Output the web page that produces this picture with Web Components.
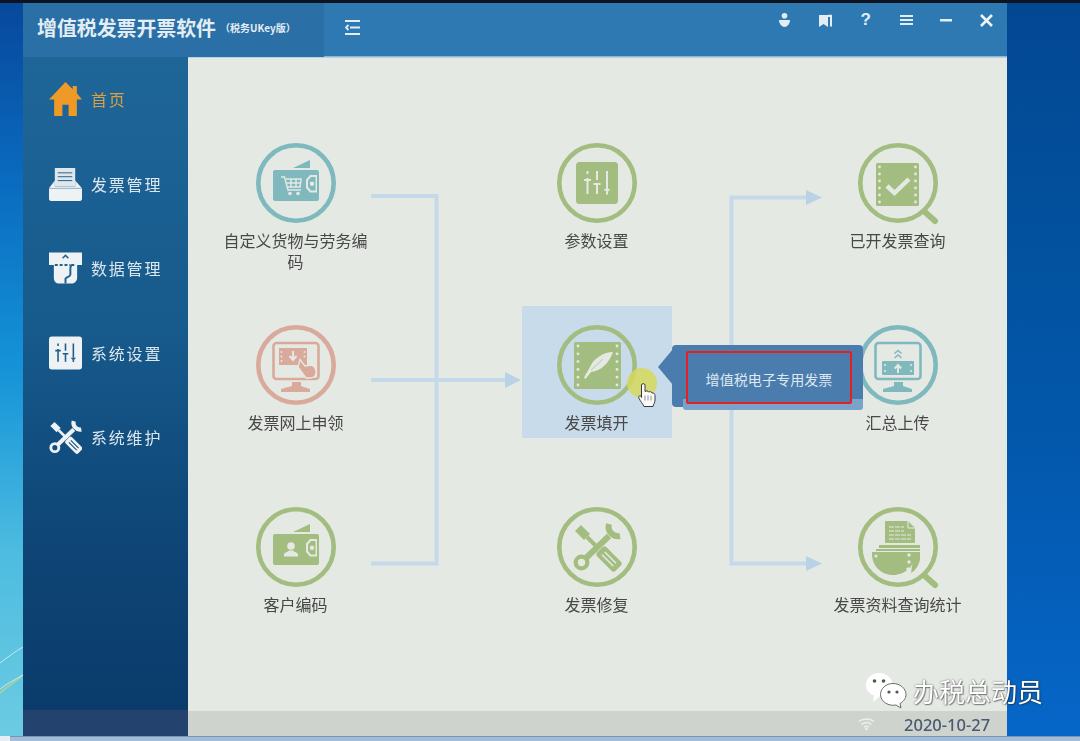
<!DOCTYPE html>
<html lang="zh-CN">
<head>
<meta charset="utf-8">
<title>增值税发票开票软件</title>
<style>
  html, body { margin: 0; padding: 0; background: #000; }
  body { width: 1080px; height: 741px; overflow: hidden; font-family: "Noto Sans CJK SC", "Noto Sans", sans-serif; }
</style>
</head>
<body>
<desk-shell>
  <app-window>
    <title-bar slot="title"></title-bar>
    <side-item slot="side" glyph="home" active>首页</side-item>
    <side-item slot="side" glyph="tray">发票管理</side-item>
    <side-item slot="side" glyph="data">数据管理</side-item>
    <side-item slot="side" glyph="sliders">系统设置</side-item>
    <side-item slot="side" glyph="tools">系统维护</side-item>
    <flow-board slot="main">
      <flow-node glyph="cart" tone="teal">自定义货物与劳务编码</flow-node>
      <flow-node glyph="sliders" tone="green">参数设置</flow-node>
      <flow-node glyph="check" tone="green" lens>已开发票查询</flow-node>
      <flow-node glyph="apply" tone="pink">发票网上申领</flow-node>
      <flow-node glyph="feather" tone="green" active>发票填开</flow-node>
      <flow-node glyph="upload" tone="teal">汇总上传</flow-node>
      <flow-node glyph="person" tone="green">客户编码</flow-node>
      <flow-node glyph="tools" tone="green">发票修复</flow-node>
      <flow-node glyph="stats" tone="green" lens>发票资料查询统计</flow-node>
      <invoice-pop slot="over">增值税电子专用发票</invoice-pop>
      <hand-cursor slot="over"></hand-cursor>
    </flow-board>
    <status-bar slot="status">2020-10-27</status-bar>
  </app-window>
  <water-mark slot="over">办税总动员</water-mark>
</desk-shell>

<script>
// film strip body shared by the check and feather icons
function film(x, y, size, dotL, dotR) {
  let dots = "";
  for (let i = 0; i < 6; i++) {
    const cy = y + 4 + i * (size - 8) / 5;
    dots += `<circle cx="${dotL}" cy="${cy}" r="1.4" fill="var(--cut)"/><circle cx="${dotR}" cy="${cy}" r="1.4" fill="var(--cut)"/>`;
  }
  return `<rect x="${x}" y="${y}" width="${size}" height="${size}" rx="1.5" fill="currentColor"/>${dots}`;
}

function wallet(inner) {
  return `<path d="M37 25 54 17V25Z" fill="currentColor"/>
    <rect x="17" y="27" width="46" height="31" rx="2" fill="currentColor"/>
    <path d="M61 32H54L50 36.500V45L54 49.500H61Z" fill="var(--cut)"/>
    <path d="M59.500 34H55L52 37.500V44L55 47.500H59.500Z" fill="currentColor"/>
    <circle cx="56" cy="40.800" r="2.200" fill="var(--cut)"/>${inner}`;
}

function monitor(inner) {
  return `<rect x="17.500" y="18" width="45" height="36" rx="3" fill="none" stroke="currentColor" stroke-width="2.600"/>
    <path d="M36 57H45V61L54 64V67H25V64L36 61Z" fill="currentColor"/>${inner}`;
}

function slidersMarks(stroke) {
  return `<g stroke="${stroke}" stroke-width="2" fill="none">
      <path d="M30.500 28v3M30.500 35v16M27 37h7M40 28v9M36.500 41h7M40 41v10M50 28v18"/>
    </g>
    <path d="M46.500 46h7L50 49.500Z" fill="${stroke}"/><path d="M50 49v2.500" stroke="${stroke}" stroke-width="2"/>`;
}

const GLYPHS = {
  cart: wallet(`<g fill="none" stroke="var(--cut)" stroke-width="1.500">
      <path d="M25 34h3.500l3.500 13h13"/>
      <path d="M30 36h15l-1 8H32M35 36v8M40 36v8M31 40h14"/>
    </g>
    <circle cx="34" cy="50.500" r="1.800" fill="var(--cut)"/><circle cx="42" cy="50.500" r="1.800" fill="var(--cut)"/>`),
  person: wallet(`<circle cx="35" cy="39" r="3.800" fill="var(--cut)"/>
    <path d="M28 49.500v-2c0-2 4-2.500 5-4h4c1 1.500 5 2 5 4v2Z" fill="var(--cut)"/>`),
  sliders: `<rect x="19" y="19" width="42" height="42" rx="3.500" fill="currentColor"/>${slidersMarks("var(--cut)")}`,
  check: film(18, 20, 43, 21.500, 57.500) +
    `<path d="M29 43l7.500 7L51 36" fill="none" stroke="var(--cut)" stroke-width="4.500"/>`,
  feather: film(17, 17, 47, 21, 60) +
    `<path d="M56 27C47 27 37 33 33 42L27 52.500 28.500 54 34 47C44 46 52 38 56 27Z" fill="var(--cut)"/>
     <path d="M34 45 46 34" stroke="currentColor" stroke-width=".7"/>`,
  apply: monitor(`<rect x="23" y="23" width="28" height="17" fill="currentColor"/>
    <g fill="var(--cut)"><circle cx="25.500" cy="27" r="1"/><circle cx="25.500" cy="31.500" r="1"/><circle cx="25.500" cy="36" r="1"/>
    <circle cx="48.500" cy="27" r="1"/><circle cx="48.500" cy="31.500" r="1"/></g>
    <path d="M37 26v8M33.500 31l3.500 4 3.500-4" fill="none" stroke="var(--cut)" stroke-width="2"/>
    <path d="M44 34.500 49 41 55 40C59 41 60 44 60 47 60 50 58 53 54 53H50L42 42Z" fill="currentColor" stroke="var(--cut)" stroke-width="1.300"/>`),
  upload: monitor(`<path d="M36.500 28.500 40 25.500 43.500 28.500M36.500 33 40 30 43.500 33" fill="none" stroke="currentColor" stroke-width="1.600"/>
    <rect x="24" y="36" width="32" height="14" rx="1" fill="currentColor"/>
    <g fill="var(--cut)"><circle cx="27" cy="40" r="1"/><circle cx="27" cy="46" r="1"/><circle cx="53" cy="40" r="1"/><circle cx="53" cy="46" r="1"/></g>
    <path d="M40 48v-7M36.800 43.500 40 40l3.200 3.500" fill="none" stroke="var(--cut)" stroke-width="2"/>`),
  tools: `<path d="M18 24 24 18 33 27 27 33Z" fill="currentColor"/>
    <path d="M30 30 42 42" stroke="currentColor" stroke-width="4"/>
    <path d="M52 17A9.500 9.500 0 0 0 63 29" fill="none" stroke="currentColor" stroke-width="6"/>
    <path d="M52 29 29 51" stroke="currentColor" stroke-width="6"/>
    <circle cx="24.500" cy="55.500" r="5.800" fill="none" stroke="currentColor" stroke-width="4.200"/>
    <g transform="rotate(45 52 52)">
      <rect x="39" y="45.500" width="26" height="13" rx="3" fill="currentColor"/>
      <path d="M44 50h16M44 54h16" stroke="var(--cut)" stroke-width="1.500"/>
    </g>`,
  stats: `<path d="M27 14H50L57 21V36H27Z" fill="currentColor"/>
    <path d="M50 14V21H57" fill="none" stroke="var(--cut)" stroke-width="1"/>
    <path d="M31 20H46M31 24H46M31 28H53M31 32H53" stroke="var(--cut)" stroke-width="1.100" stroke-dasharray="5 1"/>
    <path d="M21 38H62V41H21ZM18 42H62V44H18Z" fill="currentColor"/>
    <path d="M56 45H62V52C61 58 58 63 53 66Z" fill="currentColor"/>
    <path d="M14 45H57V47C57 59 47 68 35 68S14 59 14 47Z" fill="currentColor"/>
    <g fill="var(--cut)"><circle cx="18" cy="49" r="1.500"/><circle cx="51" cy="48" r="1.700"/><circle cx="51" cy="55" r="1.700"/><circle cx="50" cy="62" r="1.700"/></g>`
};

// sidebar-only glyphs, the rest of the rail reuses the ring icons cropped
const SIDE = {
  home: { box: "0 0 32 33", body: `<path d="M16 0 23 7V4H27V11L32 17H27V33H19V22H13V33H5V17H0Z" fill="#ef9a26"/>` },
  tray: { box: "0 0 34 35", body: `<path d="M6 1H27V20H6Z" fill="#dfe7ec"/>
      <path d="M9 6H24M9 10H24M9 14H24" stroke="#1d618f" stroke-width="1"/>
      <path d="M6 14 0 22V33C0 34 1 35 2 35H32C33 35 34 34 34 33V22L27 14V20H6Z" fill="#eef2f4" />
      <path d="M0 22H34" stroke="#8fb0c8" stroke-width="1"/>` },
  data: { box: "0 0 34 34", body: `<path d="M0 1H34V14H29V27C29 31 26 33 23 33H11C7 33 5 31 5 27V14H0Z" fill="#eef2f4"/>
      <path d="M14 7 17 4 20 7" fill="none" stroke="#1d618f" stroke-width="1.500"/>
      <path d="M6 14H22" stroke="#1d618f" stroke-width="2" stroke-dasharray="3 2"/>
      <path d="M26 14H24C22 14 22 16 22 18V24C22 26 18 26 17 28V33" fill="none" stroke="#1d618f" stroke-width="2"/>` },
  sliders: { box: "19 19 42 42", vars: "--cut:#1d5c8c", body: GLYPHS.sliders },
  tools: { box: "16 16 48 48", vars: "--cut:#174f80", body: GLYPHS.tools }
};

const TONES = { green: "#a3bd80", teal: "#7fb9bd", pink: "#d9aa9c" };

class DeskShell extends HTMLElement {
  connectedCallback() {
    this.attachShadow({ mode: "open" }).innerHTML = `
      <style>
        :host { display: grid; grid-template-rows: 3px 733px 5px; width: 1080px; height: 741px; position: relative; filter: blur(.5px); }
        .top { background: #0c1420; }
        .mid { display: grid; grid-template-columns: 23px 984px 73px; }
        .left { background: linear-gradient(180deg, #07489c 0%, #0a6cc0 25%, #1593d8 50%, #4dbce0 75%, #6ccbe2 100%); overflow: hidden; }
        .left svg { display: block; margin-top: 640px; }
        .right { background: linear-gradient(180deg, #034793 0%, #02529f 35%, #0358ac 60%, #0666c8 100%); }
        .bar { background: linear-gradient(90deg, #e6eef4 0 10px, transparent 10px), linear-gradient(180deg, #7d93aa 0 1px, #a0bcd8 1px); }
        ::slotted([slot=over]) { position: absolute; left: 865px; top: 672px; }
      </style>
      <div class="top"></div>
      <div class="mid">
        <div class="left">
          <svg width="23" height="70" viewBox="0 0 23 70" fill="none">
            <path d="M0 50C8 43 16 38 23 32" stroke="#a8cf9f" stroke-width="2"/>
            <path d="M0 20C8 14 16 8 23 4M0 46C8 40 16 36 23 32" stroke="#c4e8f2" stroke-width="1"/>
          </svg>
        </div>
        <slot></slot>
        <div class="right"></div>
      </div>
      <div class="bar"></div>
      <slot name="over"></slot>
    `;
  }
}

class AppWindow extends HTMLElement {
  connectedCallback() {
    this.attachShadow({ mode: "open" }).innerHTML = `
      <style>
        :host { display: grid; grid-template-columns: 165px 819px; grid-template-rows: 54px 654px 25px; }
        .title { grid-column: 1 / 3; display: grid; }
        .side {
          grid-row: 2 / 4; position: relative; display: flex; flex-direction: column;
          background: linear-gradient(180deg, #1f6698 0%, #175a8c 40%, #0e4677 70%, #0a3a69 100%);
        }
        .side::after { content: ""; position: absolute; left: 0; right: 0; bottom: 0; height: 26px; background: #24426e; }
        .main { display: grid; }
        .status { display: grid; }
      </style>
      <div class="title"><slot name="title"></slot></div>
      <div class="side"><slot name="side"></slot></div>
      <div class="main"><slot name="main"></slot></div>
      <div class="status"><slot name="status"></slot></div>
    `;
  }
}

class TitleBar extends HTMLElement {
  connectedCallback() {
    this.attachShadow({ mode: "open" }).innerHTML = `
      <style>
        :host { display: flex; background: #2f79b3; color: #e3edf4; box-shadow: inset 0 -1px #8fb6d4; }
        .brand { width: 286px; padding: 0 0 6px 15px; background: #2a6fa5; display: flex; align-items: center; white-space: nowrap; }
        h1 { margin: 0 0 0 -1px; font: 700 19.900px "Noto Sans CJK SC", sans-serif; }
        small { font: 700 10px "Noto Sans CJK SC", sans-serif; margin-left: 4px; }
        .fold { margin: 17px 0 0 21px; }
        .tools { margin-left: auto; display: flex; height: 34px; }
        .tools span { width: 40.400px; display: flex; align-items: center; justify-content: center; font: 700 17px "Liberation Sans", sans-serif; }
        svg { display: block; }
      </style>
      <div class="brand"><h1>增值税发票开票软件</h1><small>（税务UKey版）</small></div>
      <svg class="fold" width="15" height="15" viewBox="0 0 15 15" fill="none" stroke="#e3edf4" stroke-width="1.800">
        <path d="M0 1H15M5 7.500H15M0 14H15M3.500 5 1 7.500 3.500 10"/>
      </svg>
      <div class="tools">
        <span><svg width="11" height="14" viewBox="0 0 11 14"><circle cx="5.500" cy="2.800" r="2.800" fill="#e3edf4"/><path d="M0 7H11C11 11 8 14 5.500 14S0 11 0 7Z" fill="#e3edf4"/></svg></span>
        <span><svg width="13" height="13" viewBox="0 0 13 13"><path d="M0 1H9V13L4.500 10 0 13Z" fill="#e3edf4"/><path d="M9 .8H13V12.500H11V3H9Z" fill="#e3edf4"/></svg></span>
        <span>?</span>
        <span><svg width="13" height="10" viewBox="0 0 13 10" fill="#e3edf4"><rect width="13" height="2"/><rect y="4" width="13" height="2"/><rect y="8" width="13" height="2"/></svg></span>
        <span><svg width="12" height="3" viewBox="0 0 12 3"><rect width="12" height="2.500" fill="#e3edf4"/></svg></span>
        <span><svg width="13" height="13" viewBox="0 0 13 13"><path d="M1 1 12 12M12 1 1 12" stroke="#eef4f8" stroke-width="2.600"/></svg></span>
      </div>
    `;
  }
}

class SideItem extends HTMLElement {
  connectedCallback() {
    const g = SIDE[this.getAttribute("glyph")];
    const on = this.hasAttribute("active");
    this.attachShadow({ mode: "open" }).innerHTML = `
      <style>
        :host { display: flex; align-items: center; height: 84.500px; padding-left: 25.500px; gap: 9.500px; position: relative; z-index: 1;
          color: ${on ? "#d9a046" : "#dce6ed"}; font: 400 16px "Noto Sans CJK SC", sans-serif; letter-spacing: 1.800px; }
        .ic { width: 33px; height: 34px; display: flex; justify-content: center; align-items: center; color: #eef2f4; ${g.vars || ""}; }
        svg { display: block; }
      </style>
      <span class="ic"><svg width="33" height="34" viewBox="${g.box}">${g.body}</svg></span>
      <slot></slot>
    `;
  }
}

class FlowBoard extends HTMLElement {
  connectedCallback() {
    this.attachShadow({ mode: "open" }).innerHTML = `
      <style>
        :host { display: grid; position: relative; background: #e5e9e4; box-shadow: inset 0 1px #b9d0e2;
          grid-template-columns: repeat(3, 150px); grid-auto-rows: 132px; column-gap: 151px; row-gap: 50px;
          padding: 67px 0 0 33px; box-sizing: border-box; align-content: start; }
        .lines { position: absolute; left: 0; top: 0; }
      </style>
      <svg class="lines" width="819" height="654" viewBox="188 57 819 654" fill="none" stroke="#c6d9e9" stroke-width="4">
        <path d="M371 196H436.500V563.500H371"/>
        <path d="M371 380H507"/>
        <path d="M505 372 521 380 505 388Z" fill="#b9d2e6" stroke="none"/>
        <path d="M808 197.500H731.500V563.500H808"/>
        <path d="M806 190 822 197.500 806 205Z" fill="#b9d2e6" stroke="none"/>
        <path d="M806 556 822 563.500 806 571Z" fill="#b9d2e6" stroke="none"/>
      </svg>
      <slot></slot>
      <slot name="over"></slot>
    `;
  }
}

class FlowNode extends HTMLElement {
  connectedCallback() {
    const tone = TONES[this.getAttribute("tone")];
    const on = this.hasAttribute("active");
    const lens = this.hasAttribute("lens")
      ? `<path d="M67.500 69.500 77 78" stroke="currentColor" stroke-width="6" stroke-linecap="round"/>` : "";
    this.attachShadow({ mode: "open" }).innerHTML = `
      <style>
        :host { display: flex; flex-direction: column; align-items: center; position: relative; box-sizing: border-box;
          padding-top: 19px; text-align: center; color: #484848; font: 400 16px/21px "Noto Sans CJK SC", sans-serif;
          background: ${on ? "#c8dbeb" : "transparent"}; }
        svg { display: block; color: ${tone}; overflow: visible; flex: none; --cut: #e5e9e4; }
        .txt { margin: 7px 0 0 -1px; width: 146px; }
      </style>
      <svg width="80" height="80" viewBox="0 0 80 80">
        <circle cx="40" cy="40" r="37.700" fill="none" stroke="currentColor" stroke-width="4.600"/>
        ${GLYPHS[this.getAttribute("glyph")]}
        ${lens}
      </svg>
      <div class="txt"><slot></slot></div>
    `;
  }
}

class InvoicePop extends HTMLElement {
  connectedCallback() {
    this.attachShadow({ mode: "open" }).innerHTML = `
      <style>
        :host { position: absolute; left: 484px; top: 288px; width: 191px; height: 65px; display: block; }
        .strip { position: absolute; left: 11px; right: 0; top: 54px; height: 11px; background: #7ba3ca; border-radius: 0 0 3px 3px; }
        .box { position: absolute; left: 0; right: 0; top: 0; height: 62px; background: #4a7dae; border-radius: 4px; }
        .tip { position: absolute; left: -14px; top: 4px; width: 0; height: 0;
          border-style: solid; border-width: 18px 15px 18px 0; border-color: transparent #4a7dae transparent transparent; }
        .red { position: absolute; left: 14px; top: 6px; width: 162px; height: 47px; border: 2px solid #e5201d; border-radius: 2px;
          background: #4a7dae; display: flex; align-items: center; justify-content: center;
          color: #dfe8f0; font: 400 14.100px "Noto Sans CJK SC", sans-serif; padding-top: 2px; box-sizing: content-box; }
      </style>
      <div class="box"></div><div class="strip"></div><div class="tip"></div>
      <div class="red"><slot></slot></div>
    `;
  }
}

class HandCursor extends HTMLElement {
  connectedCallback() {
    this.attachShadow({ mode: "open" }).innerHTML = `
      <style>
        :host { position: absolute; left: 438px; top: 311px; width: 32px; height: 40px; display: block; }
        .spot { position: absolute; left: 1px; top: 0; width: 30px; height: 30px; border-radius: 50%; background: rgba(214, 216, 92, .85); }
        svg { position: absolute; left: 12px; top: 15px; }
      </style>
      <div class="spot"></div>
      <svg width="18" height="24" viewBox="0 0 18 24">
        <path d="M3.500 2C3.500 .2 7 .2 7 2V8.500C8.500 7.500 10 7.800 10.500 9 12 8.300 13.500 8.800 14 10 15.500 9.800 17 10.500 17 12.500V17C17 20 15.500 21 15 23.500H6C5 21 2.500 18.500 .8 15 .1 13.300 2 12 3 13.300L3.500 14.500Z"
          fill="#fbfbfb" stroke="#3a3a3a" stroke-width="1"/>
        <path d="M7 12.500v5M10 12.500v5M13 12.500v5" stroke="#777" stroke-width=".8"/>
      </svg>
    `;
  }
}

class StatusBar extends HTMLElement {
  connectedCallback() {
    this.attachShadow({ mode: "open" }).innerHTML = `
      <style>
        :host { display: flex; align-items: center; background: #cfd3ce; padding: 2px 0 0 670px; box-sizing: border-box; gap: 29px;
          color: #4c5a70; font: 500 16.500px "Noto Sans", sans-serif; white-space: nowrap; }
        svg { display: block; margin-top: -2px; }
      </style>
      <svg width="17" height="13" viewBox="0 0 17 13" fill="none" stroke="#eef0ee" stroke-width="1.500">
        <path d="M1 4.500C5 1 12 1 16 4.500M3.500 7.500C6.500 5 10.500 5 13.500 7.500M6 10.300C7.500 9 9.500 9 11 10.300"/>
        <circle cx="8.500" cy="12" r=".6" fill="#eef0ee"/>
      </svg>
      <slot></slot>
    `;
  }
}

class WaterMark extends HTMLElement {
  connectedCallback() {
    this.attachShadow({ mode: "open" }).innerHTML = `
      <style>
        :host { display: flex; align-items: center; gap: 6px; color: #fff; font: 400 26px/36px "Noto Sans CJK SC", sans-serif;
          text-shadow: 0 0 2px rgba(40, 40, 40, .75), 1px 1px 1px rgba(40, 40, 40, .45); white-space: nowrap; }
        svg { display: block; }
      </style>
      <svg width="42" height="37" viewBox="0 0 42 37">
        <path d="M14 1C21.500 1 27.500 6.500 27.500 13 27.500 19.500 21.500 25 14 25L8 30 9 23.500C4 21.500 1 17.500 1 13 1 6.500 6.500 1 14 1Z" fill="#fff"/>
        <circle cx="9.500" cy="9" r="1.800" fill="#555"/><circle cx="18.500" cy="9" r="1.800" fill="#555"/>
        <path d="M28 11.500C35 11.500 41 16.500 41 22.500 41 26.500 38.500 29.500 35 31.500L36 36 31 33C24 34.500 15.500 30 15.500 22.500 15.500 16.500 21 11.500 28 11.500Z" fill="#fff" stroke="#6b6b6b" stroke-width="1"/>
        <circle cx="24" cy="20" r="1.600" fill="#555"/><circle cx="32" cy="20" r="1.600" fill="#555"/>
      </svg>
      <slot></slot>
    `;
  }
}

customElements.define("desk-shell", DeskShell);
customElements.define("app-window", AppWindow);
customElements.define("title-bar", TitleBar);
customElements.define("side-item", SideItem);
customElements.define("flow-board", FlowBoard);
customElements.define("flow-node", FlowNode);
customElements.define("invoice-pop", InvoicePop);
customElements.define("hand-cursor", HandCursor);
customElements.define("status-bar", StatusBar);
customElements.define("water-mark", WaterMark);
</script>
</body>
</html>
